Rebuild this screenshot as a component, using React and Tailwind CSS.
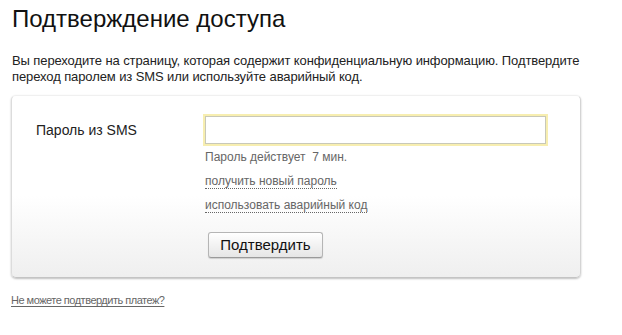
export default function App() {
  return (
    <div className="w-[622px] h-[335px] bg-white text-black overflow-hidden" style={{ fontFamily: '"Liberation Sans", Arial, sans-serif' }}>
      <div className="pl-[12px] pt-[4px]">
        <h1 className="text-[24px] leading-[30px] text-[#111]">Подтверждение доступа</h1>
      </div>
      <p className="pl-[12px] pt-[19px] text-[13px] leading-[16px] tracking-[-0.1px] text-[#222] w-[600px]">
        Вы переходите на страницу, которая содержит конфиденциальную информацию. Подтвердите переход паролем из SMS или используйте аварийный код.
      </p>
      <div className="ml-[11px] mt-[10px] w-[570px] h-[183px] rounded-[5px] border border-[#f0f0f0] border-b-[#c4c4c4] border-l-[#dcdcdc] border-r-[#d4d4d4] bg-gradient-to-b from-white from-55% to-[#efefef] shadow-[0_1px_2px_rgba(0,0,0,0.25)] flex">
        <div className="w-[193px] pl-[24px] pt-[24px] text-[14px] text-[#222]">Пароль из SMS</div>
        <div className="flex flex-col pt-[20px]">
          <div className="w-[341px] h-[28px] border border-[#c8c8b8] shadow-[0_0_0_2px_#f7eeb0] bg-white"></div>
          <div className="mt-[5px] text-[12px] leading-[16px] text-[#666]">Пароль действует&nbsp; 7 мин.</div>
          <div className="mt-[8px] text-[12px] leading-[16px] text-[#666]">
            <span className="border-b border-dotted border-[#666]">получить новый пароль</span>
          </div>
          <div className="mt-[8px] text-[12px] leading-[16px] text-[#666]">
            <span className="border-b border-dotted border-[#666]">использовать аварийный код</span>
          </div>
          <button className="mt-[19px] ml-[3px] w-[115px] h-[26px] rounded-[3px] border border-[#b5b5b5] border-b-[#9a9a9a] bg-gradient-to-b from-white to-[#e6e6e6] text-[15px] text-[#111] shadow-[0_1px_1px_rgba(0,0,0,0.15)]">
            Подтвердить
          </button>
        </div>
      </div>
      <div className="pl-[11px] pt-[14px] leading-[14px]">
        <span className="text-[11px] tracking-[-0.5px] text-[#666] underline underline-offset-2">Не можете подтвердить платеж?</span>
      </div>
    </div>
  );
}
